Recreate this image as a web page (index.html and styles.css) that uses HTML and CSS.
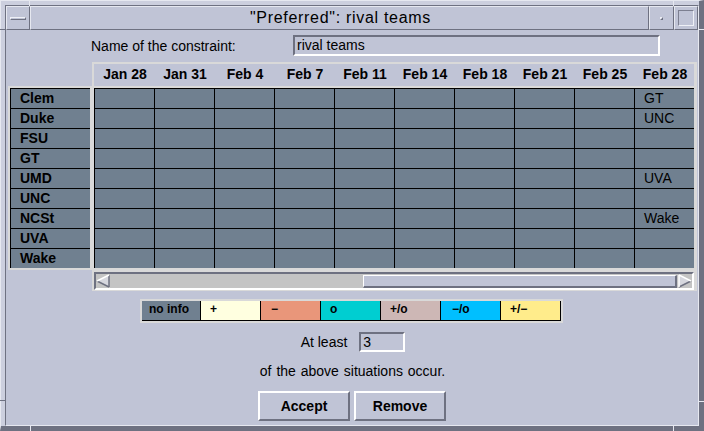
FILE: index.html
```html
<!DOCTYPE html>
<html>
<head>
<meta charset="utf-8">
<link rel="stylesheet" href="styles.css">
</head>
<body>
<div class="window">
  <div class="inner">
    <div class="titlebar">
      <div class="tb-btn tb-menu"><span class="menu-bar"></span></div>
      <div class="tb-btn tb-title">"Preferred": rival teams</div>
      <div class="tb-btn tb-min"><span class="min-dot"></span></div>
      <div class="tb-btn tb-max"><span class="max-box"></span></div>
    </div>
    <div class="content">
      <div class="name-row">
        <span class="name-label">Name of the constraint:</span>
        <div class="field name-field">rival teams</div>
      </div>
      <div class="dates">
        <div class="date">Jan 28</div><div class="date">Jan 31</div><div class="date">Feb 4</div><div class="date">Feb 7</div><div class="date">Feb 11</div><div class="date">Feb 14</div><div class="date">Feb 18</div><div class="date">Feb 21</div><div class="date">Feb 25</div><div class="date">Feb 28</div>
      </div>
      <div class="table-body">
        <div class="labels">
          <div class="team">Clem</div><div class="team">Duke</div><div class="team">FSU</div><div class="team">GT</div><div class="team">UMD</div><div class="team">UNC</div><div class="team">NCSt</div><div class="team">UVA</div><div class="team">Wake</div>
        </div>
        <div class="gridbox">
          <div class="grid">
            <div class="cell"></div><div class="cell"></div><div class="cell"></div><div class="cell"></div><div class="cell"></div><div class="cell"></div><div class="cell"></div><div class="cell"></div><div class="cell"></div><div class="cell">GT</div>
            <div class="cell"></div><div class="cell"></div><div class="cell"></div><div class="cell"></div><div class="cell"></div><div class="cell"></div><div class="cell"></div><div class="cell"></div><div class="cell"></div><div class="cell">UNC</div>
            <div class="cell"></div><div class="cell"></div><div class="cell"></div><div class="cell"></div><div class="cell"></div><div class="cell"></div><div class="cell"></div><div class="cell"></div><div class="cell"></div><div class="cell"></div>
            <div class="cell"></div><div class="cell"></div><div class="cell"></div><div class="cell"></div><div class="cell"></div><div class="cell"></div><div class="cell"></div><div class="cell"></div><div class="cell"></div><div class="cell"></div>
            <div class="cell"></div><div class="cell"></div><div class="cell"></div><div class="cell"></div><div class="cell"></div><div class="cell"></div><div class="cell"></div><div class="cell"></div><div class="cell"></div><div class="cell">UVA</div>
            <div class="cell"></div><div class="cell"></div><div class="cell"></div><div class="cell"></div><div class="cell"></div><div class="cell"></div><div class="cell"></div><div class="cell"></div><div class="cell"></div><div class="cell"></div>
            <div class="cell"></div><div class="cell"></div><div class="cell"></div><div class="cell"></div><div class="cell"></div><div class="cell"></div><div class="cell"></div><div class="cell"></div><div class="cell"></div><div class="cell">Wake</div>
            <div class="cell"></div><div class="cell"></div><div class="cell"></div><div class="cell"></div><div class="cell"></div><div class="cell"></div><div class="cell"></div><div class="cell"></div><div class="cell"></div><div class="cell"></div>
            <div class="cell"></div><div class="cell"></div><div class="cell"></div><div class="cell"></div><div class="cell"></div><div class="cell"></div><div class="cell"></div><div class="cell"></div><div class="cell"></div><div class="cell"></div>
          </div>
          <div class="scrollbar">
            <svg class="arrow arrow-left" width="14" height="14" viewBox="0 0 14 14">
              <polygon points="1,7 13,1 13,13" fill="#d6d7de"/>
              <line x1="1" y1="7" x2="13" y2="13" stroke="#6e7181" stroke-width="1.5"/>
              <line x1="13" y1="1" x2="13" y2="13" stroke="#6e7181" stroke-width="1.5"/>
              <line x1="1" y1="7" x2="13" y2="1" stroke="#ffffff" stroke-width="1.5"/>
            </svg>
            <div class="trough"></div>
            <div class="thumb"></div>
            <svg class="arrow arrow-right" width="15" height="14" viewBox="0 0 15 14">
              <polygon points="2,1 14,7 2,13" fill="#d6d7de"/>
              <line x1="2" y1="13" x2="14" y2="7" stroke="#6e7181" stroke-width="1.5"/>
              <line x1="2" y1="1" x2="2" y2="13" stroke="#ffffff" stroke-width="1.5"/>
              <line x1="2" y1="1" x2="14" y2="7" stroke="#ffffff" stroke-width="1.5"/>
            </svg>
          </div>
        </div>
      </div>
      <div class="legend">
        <div class="lg lg-none">no info</div>
        <div class="lg lg-plus">+</div>
        <div class="lg lg-minus">&minus;</div>
        <div class="lg lg-o">o</div>
        <div class="lg lg-po">+/o</div>
        <div class="lg lg-mo">&minus;/o</div>
        <div class="lg lg-pm">+/&minus;</div>
      </div>
      <div class="atleast-row">
        <span class="atleast-label">At least</span>
        <div class="field count-field">3</div>
      </div>
      <div class="occur">of the above situations occur.</div>
      <div class="buttons">
        <div class="btn">Accept</div>
        <div class="btn">Remove</div>
      </div>
    </div>
  </div>
  <span class="tick tick-top-l"></span>
  <span class="tick tick-top-r"></span>
  <span class="tick tick-left-t"></span>
  <span class="tick tick-right-t"></span>
  <span class="tick tick-left-b"></span>
  <span class="tick tick-right-b"></span>
  <span class="tick tick-bot-l"></span>
  <span class="tick tick-bot-r"></span>
</div>
</body>
</html>
```

FILE: styles.css
```css
body {
  margin: 0;
  background: #c0c4d6;
  font-family: "Liberation Sans", Arial, Helvetica, sans-serif;
  font-size: 14px;
  color: #000;
}

.window {
  position: relative;
  width: 704px;
  height: 431px;
  box-sizing: border-box;
  background: #cccfde;
  border-top: 1px solid #e6e8f0;
  border-left: 1px solid #e6e8f0;
  border-right: 5px solid #6e7181;
  border-bottom: 5px solid #6e7181;
  padding: 4px 0 0 4px;
}

.inner {
  height: 100%;
  box-sizing: border-box;
  background: #c0c4d6;
  border-left: 1px solid #6e7181;
  border-top: 1px solid #6e7181;
  border-right: 1px solid #e6e8f0;
  border-bottom: 1px solid #e6e8f0;
}

/* title bar */
.titlebar {
  display: flex;
  height: 24px;
}

.tb-btn {
  box-sizing: border-box;
  height: 24px;
  border-top: 1px solid #e6e8f0;
  border-left: 1px solid #e6e8f0;
  border-bottom: 1px solid #6e7181;
  border-right: 1px solid #6e7181;
  display: flex;
  align-items: center;
  justify-content: center;
}

.tb-menu { width: 24px; }
.tb-title {
  flex: 1;
  font-size: 16px;
  letter-spacing: 0.7px;
  line-height: 20px;
  padding-left: 2px;
}
.tb-min { width: 25px; }
.tb-max { width: 24px; }

.menu-bar {
  display: block;
  width: 14px;
  height: 1px;
  border-top: 1px solid #eef0f6;
  border-left: 1px solid #eef0f6;
  border-bottom: 1px solid #6e7181;
  border-right: 1px solid #6e7181;
}

.min-dot {
  display: block;
  width: 1px;
  height: 1px;
  border-top: 1px solid #eef0f6;
  border-left: 1px solid #eef0f6;
  border-bottom: 1px solid #6e7181;
  border-right: 1px solid #6e7181;
}

.max-box {
  display: block;
  width: 14px;
  height: 14px;
  border-top: 1px solid #7c7f90;
  border-left: 1px solid #7c7f90;
  border-bottom: 1px solid #eef0f6;
  border-right: 1px solid #eef0f6;
}

/* name row */
.name-row {
  display: flex;
  align-items: center;
  margin-top: 5px;
  padding-left: 85px;
  height: 21px;
}

.name-label {
  width: 202px;
}

.field {
  box-sizing: border-box;
  border-top: 2px solid #6e7181;
  border-left: 2px solid #6e7181;
  border-bottom: 2px solid #ffffff;
  border-right: 2px solid #ffffff;
  padding-left: 2px;
  line-height: 17px;
}

.name-field {
  width: 367px;
  height: 21px;
}

/* dates header */
.dates {
  display: flex;
  margin-top: 6px;
  margin-left: 86px;
  width: 605px;
  height: 24px;
  box-sizing: border-box;
  border-top: 2px solid #d9d9d9;
  border-left: 2px solid #d9d9d9;
  border-right: 3px solid #d9d9d9;
}

.date {
  width: 60px;
  text-align: center;
  font-weight: bold;
  line-height: 20px;
  padding-left: 2px;
  box-sizing: border-box;
}

/* table body */
.table-body {
  display: flex;
  align-items: flex-start;
  margin-left: 2px;
}

.labels {
  width: 84px;
  box-sizing: border-box;
  padding: 2px;
  background: #d9d9d9;
}

.team {
  box-sizing: border-box;
  height: 20px;
  background: #708090;
  border-left: 1px solid #000;
  border-top: 1px solid #000;
  padding-left: 9px;
  font-weight: bold;
  line-height: 19px;
}

.gridbox {
  width: 605px;
  box-sizing: border-box;
  padding: 2px 3px 1px 2px;
  background: #d9d9d9;
}

.grid {
  display: grid;
  grid-template-columns: repeat(10, 60px);
  grid-auto-rows: 20px;
  background: #708090;
}

.cell {
  box-sizing: border-box;
  border-left: 1px solid #000;
  border-top: 1px solid #000;
  padding-left: 9px;
  line-height: 19px;
}

.scrollbar {
  display: flex;
  margin-top: 4px;
  width: 600px;
  height: 18px;
  box-sizing: border-box;
  border-top: 2px solid #6e7181;
  border-left: 2px solid #6e7181;
  border-bottom: 2px solid #ffffff;
  border-right: 2px solid #ffffff;
  background: #c4c4c4;
}

.arrow { display: block; flex: none; }

.trough { width: 253px; }

.thumb {
  width: 314px;
  height: 13px;
  margin-top: 1px;
  box-sizing: border-box;
  background: #c0c4d6;
  border-top: 1px solid #ffffff;
  border-left: 1px solid #ffffff;
  border-bottom: 2px solid #6e7181;
  border-right: 2px solid #6e7181;
}

/* legend */
.legend {
  display: flex;
  margin-top: 8px;
  margin-left: 134px;
  width: 423px;
  box-sizing: border-box;
  padding: 2px;
  background: #d9d9d9;
}

.lg {
  box-sizing: border-box;
  width: 60px;
  height: 20px;
  border-right: 1px solid #000;
  border-bottom: 1px solid #000;
  font-size: 12px;
  font-weight: bold;
  line-height: 16px;
  padding-left: 9px;
}

.lg-none { width: 59px; background: #708090; padding-left: 7px; }
.lg-plus { background: #ffffe0; }
.lg-minus { background: #e9967a; padding-left: 10px; }
.lg-o { background: #00ced1; }
.lg-po { background: #cdb7b5; }
.lg-mo { background: #00bfff; padding-left: 11px; }
.lg-pm { background: #ffec8b; }

/* at least */
.atleast-row {
  display: flex;
  justify-content: center;
  align-items: center;
  gap: 12px;
  margin-top: 9px;
  height: 20px;
  padding-left: 2px;
}

.count-field {
  width: 46px;
  height: 20px;
  line-height: 16px;
}

.occur {
  margin-top: 9px;
  line-height: 20px;
  text-align: center;
  padding-left: 1px;
  word-spacing: 1px;
}

.buttons {
  display: flex;
  justify-content: center;
  gap: 4px;
  margin-top: 10px;
}

.btn {
  box-sizing: border-box;
  width: 92px;
  height: 30px;
  border-top: 2px solid #ffffff;
  border-left: 2px solid #ffffff;
  border-bottom: 2px solid #6e7181;
  border-right: 2px solid #6e7181;
  font-weight: bold;
  text-align: center;
  line-height: 26px;
}

/* frame resize ticks (overlay on the window border) */
.tick {
  position: absolute;
  display: block;
}
.tick-top-l { left: 28px; top: -1px; width: 1px; height: 6px; background: #e6e8f0; }
.tick-top-r { left: 672px; top: -1px; width: 1px; height: 6px; background: #e6e8f0; }
.tick-left-t { left: -1px; top: 28px; width: 5px; height: 1px; background: #6e7181; }
.tick-right-t { right: -5px; top: 28px; width: 5px; height: 1px; background: #e6e8f0; }
.tick-left-b { left: -1px; top: 399px; width: 5px; height: 1px; background: #6e7181; }
.tick-right-b { right: -5px; top: 400px; width: 5px; height: 1px; background: #e6e8f0; }
.tick-bot-l { left: 29px; bottom: -5px; width: 1px; height: 5px; background: #e6e8f0; }
.tick-bot-r { left: 672px; bottom: -5px; width: 1px; height: 5px; background: #e6e8f0; }
```
